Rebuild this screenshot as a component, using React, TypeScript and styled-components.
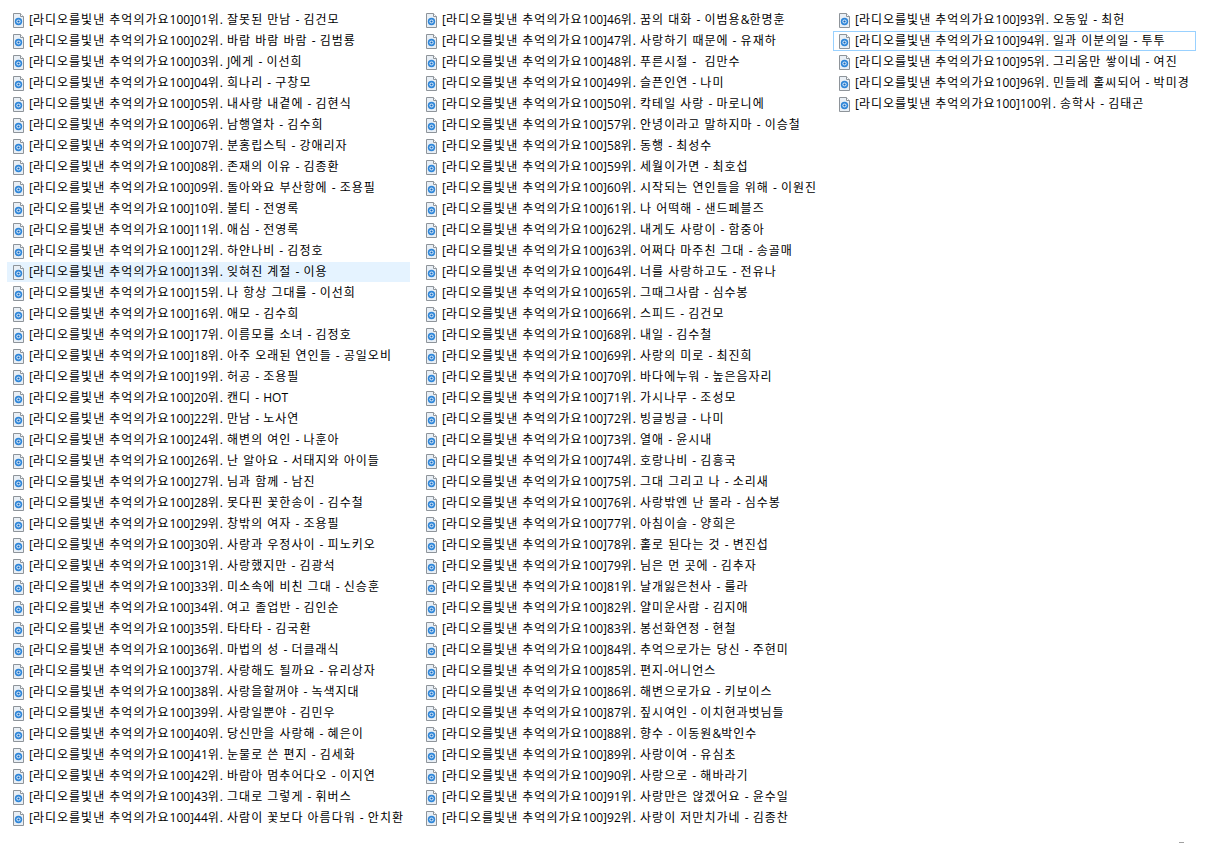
import styled, { createGlobalStyle } from "styled-components";

const PREFIX = "[라디오를빛낸 추억의가요100]";

const columns: string[][] = [
  [
    "01위. 잘못된 만남 - 김건모",
    "02위. 바람 바람 바람 - 김범룡",
    "03위. J에게 - 이선희",
    "04위. 희나리 - 구창모",
    "05위. 내사랑 내곁에 - 김현식",
    "06위. 남행열차 - 김수희",
    "07위. 분홍립스틱 - 강애리자",
    "08위. 존재의 이유 - 김종환",
    "09위. 돌아와요 부산항에 - 조용필",
    "10위. 불티 - 전영록",
    "11위. 애심 - 전영록",
    "12위. 하얀나비 - 김정호",
    "13위. 잊혀진 계절 - 이용",
    "15위. 나 항상 그대를 - 이선희",
    "16위. 애모 - 김수희",
    "17위. 이름모를 소녀 - 김정호",
    "18위. 아주 오래된 연인들 - 공일오비",
    "19위. 허공 - 조용필",
    "20위. 캔디 - HOT",
    "22위. 만남 - 노사연",
    "24위. 해변의 여인 - 나훈아",
    "26위. 난 알아요 - 서태지와 아이들",
    "27위. 님과 함께 - 남진",
    "28위. 못다핀 꽃한송이 - 김수철",
    "29위. 창밖의 여자 - 조용필",
    "30위. 사랑과 우정사이 - 피노키오",
    "31위. 사랑했지만 - 김광석",
    "33위. 미소속에 비친 그대 - 신승훈",
    "34위. 여고 졸업반 - 김인순",
    "35위. 타타타 - 김국환",
    "36위. 마법의 성 - 더클래식",
    "37위. 사랑해도 될까요 - 유리상자",
    "38위. 사랑을할꺼야 - 녹색지대",
    "39위. 사랑일뿐야 - 김민우",
    "40위. 당신만을 사랑해 - 혜은이",
    "41위. 눈물로 쓴 편지 - 김세화",
    "42위. 바람아 멈추어다오 - 이지연",
    "43위. 그대로 그렇게 - 휘버스",
    "44위. 사람이 꽃보다 아름다워 - 안치환",
  ],
  [
    "46위. 꿈의 대화 - 이범용&한명훈",
    "47위. 사랑하기 때문에 - 유재하",
    "48위. 푸른시절 -  김만수",
    "49위. 슬픈인연 - 나미",
    "50위. 칵테일 사랑 - 마로니에",
    "57위. 안녕이라고 말하지마 - 이승철",
    "58위. 동행 - 최성수",
    "59위. 세월이가면 - 최호섭",
    "60위. 시작되는 연인들을 위해 - 이원진",
    "61위. 나 어떡해 - 샌드페블즈",
    "62위. 내게도 사랑이 - 함중아",
    "63위. 어쩌다 마주친 그대 - 송골매",
    "64위. 너를 사랑하고도 - 전유나",
    "65위. 그때그사람 - 심수봉",
    "66위. 스피드 - 김건모",
    "68위. 내일 - 김수철",
    "69위. 사랑의 미로 - 최진희",
    "70위. 바다에누워 - 높은음자리",
    "71위. 가시나무 - 조성모",
    "72위. 빙글빙글 - 나미",
    "73위. 열애 - 윤시내",
    "74위. 호랑나비 - 김흥국",
    "75위. 그대 그리고 나 - 소리새",
    "76위. 사랑밖엔 난 몰라 - 심수봉",
    "77위. 아침이슬 - 양희은",
    "78위. 홀로 된다는 것 - 변진섭",
    "79위. 님은 먼 곳에 - 김추자",
    "81위. 날개잃은천사 - 룰라",
    "82위. 얄미운사람 - 김지애",
    "83위. 봉선화연정 - 현철",
    "84위. 추억으로가는 당신 - 주현미",
    "85위. 편지-어니언스",
    "86위. 해변으로가요 - 키보이스",
    "87위. 짚시여인 - 이치현과벗님들",
    "88위. 향수 - 이동원&박인수",
    "89위. 사랑이여 - 유심초",
    "90위. 사랑으로 - 해바라기",
    "91위. 사랑만은 않겠어요 - 윤수일",
    "92위. 사랑이 저만치가네 - 김종찬",
  ],
  [
    "93위. 오동잎 - 최헌",
    "94위. 일과 이분의일 - 투투",
    "95위. 그리움만 쌓이네 - 여진",
    "96위. 민들레 홀씨되어 - 박미경",
    "100위. 송학사 - 김태곤",
  ],
];

const GlobalStyle = createGlobalStyle`
  html, body {
    margin: 0;
    background: #fff;
  }
  body {
    font-family: "Open Sans", "Noto Sans CJK KR", sans-serif;
    font-size: 12px;
    color: #000;
  }
`;

const Page = styled.div`
  position: relative;
  width: 1219px;
  height: 844px;
  overflow: hidden;
  box-sizing: border-box;
  padding: 10px 0 0 7px;
  display: flex;
  gap: 10px;
  align-items: flex-start;
`;

const Column = styled.ul<{ $width: number }>`
  list-style: none;
  margin: 0;
  padding: 0;
  width: ${(p) => p.$width}px;
  display: flex;
  flex-direction: column;
  gap: 1px;
`;

const Row = styled.li<{ $state?: "hover" | "focus" }>`
  height: 20px;
  box-sizing: border-box;
  display: flex;
  align-items: center;
  gap: 5px;
  padding-left: 6px;
  white-space: pre;
  background: ${(p) => (p.$state === "hover" ? "#e5f3ff" : "transparent")};
  outline: ${(p) => (p.$state === "focus" ? "1px solid #99d1ff" : "none")};
  outline-offset: -1px;
`;

const RowLabel = styled.span`
  line-height: 20px;
  word-spacing: 1px;
`;

// hangul runs are set one pixel wider per glyph than the font's own advance
const Hangul = styled.span`
  letter-spacing: 1px;
`;

const CornerMark = styled.div`
  position: absolute;
  left: 1179px;
  top: 842px;
  width: 5px;
  height: 1px;
  background: #a0a0a0;
`;

const FileIcon = () => (
  <svg width="11" height="15" viewBox="0 0 11 15" style={{ flex: "none" }}>
    <path d="M0.5 0.5H7.5L10.5 3.5V14.5H0.5Z" fill="#e9eff5" stroke="#8e949a" />
    <path d="M7.5 0.5V3.5H10.5" fill="#fff" stroke="#8e949a" />
    <circle cx="5.5" cy="8.5" r="3.7" fill="#2f86d8" />
    <circle cx="5.5" cy="8.5" r="2.1" fill="#cfe5f8" />
    <circle cx="5.5" cy="8.5" r="1.1" fill="#1668c0" />
  </svg>
);

const columnWidths = [403, 403, 363];

const rowState = (name: string) => {
  if (name.startsWith("13위")) return "hover";
  if (name.startsWith("94위")) return "focus";
  return undefined;
};

const renderLabel = (text: string) =>
  text
    .split(/([\uac00-\ud7a3]+)/)
    .map((part, i) => (i % 2 === 1 ? <Hangul key={i}>{part}</Hangul> : part));

export default function App() {
  return (
    <>
      <GlobalStyle />
      <Page>
        {columns.map((items, i) => (
          <Column key={i} $width={columnWidths[i]}>
            {items.map((name) => (
              <Row key={name} $state={rowState(name)}>
                <FileIcon />
                <RowLabel>{renderLabel(PREFIX + name)}</RowLabel>
              </Row>
            ))}
          </Column>
        ))}
        <CornerMark />
      </Page>
    </>
  );
}
